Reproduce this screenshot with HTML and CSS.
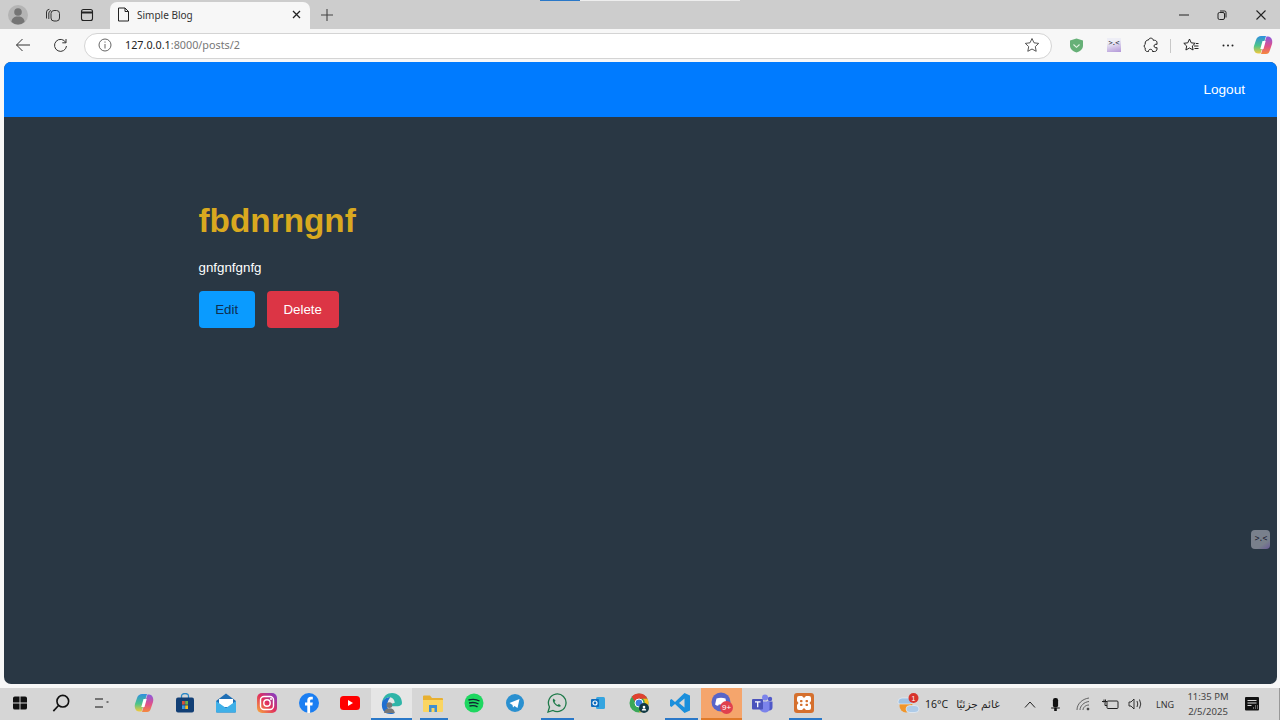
FILE: index.html
```html
<!DOCTYPE html>
<html lang="en">
<head>
  <meta charset="UTF-8">
  <title>Simple Blog</title>
  <link rel="stylesheet" href="styles.css">
</head>
<body>

<div class="top-strip"><span class="strip-blue"></span><span class="strip-light"></span></div>

<header class="tabbar">
  <div class="slot">
    <svg width="20" height="20" viewBox="0 0 20 20"><circle cx="10" cy="10" r="10" fill="#b4b4b4"/><circle cx="10" cy="7" r="3.800" fill="#757575"/><path d="M3.500 17c0-3.500 2.500-5.500 6.500-5.500s6.500 2 6.500 5.500q-3 2.500-6.500 2.500T3.500 17z" fill="#757575"/></svg>
  </div>
  <div class="slot">
    <svg width="16" height="16" viewBox="0 0 16 16" fill="none" stroke="#333" stroke-width="1"><rect x="6" y="3.500" width="8.500" height="10.500" rx="3"/><path d="M6 3.500A3 3 0 0 0 3.800 6v6M4.400 2.300A3 3 0 0 0 1.500 5v6.500"/></svg>
  </div>
  <div class="slot">
    <svg width="14" height="14" viewBox="0 0 14 14" fill="none" stroke="#222" stroke-width="1.100"><rect x="1.500" y="1.500" width="11" height="11" rx="2"/><path d="M1.500 4.500h11" stroke-width="2"/></svg>
  </div>
  <div class="tab">
    <svg width="13" height="15" viewBox="0 0 13 15" fill="none" stroke="#222" stroke-width="1"><path d="M1.500 1h6.500l3.500 3.500v9.500h-10zM8 1v3.500h3.500"/></svg>
    <span class="tab-title">Simple Blog</span>
    <svg class="tab-close" width="9" height="9" viewBox="0 0 9 9" stroke="#222" stroke-width="1.300"><path d="M1 1l7 7M8 1l-7 7"/></svg>
  </div>
  <div class="slot">
    <svg width="14" height="14" viewBox="0 0 14 14" stroke="#444" stroke-width="1.100"><path d="M7 1v12M1 7h12"/></svg>
  </div>
  <div class="spacer"></div>
  <div class="slot win">
    <svg width="10" height="10" viewBox="0 0 10 10" stroke="#222" stroke-width="1"><path d="M0 5h10"/></svg>
  </div>
  <div class="slot win">
    <svg width="10" height="10" viewBox="0 0 10 10" fill="none" stroke="#222" stroke-width="1"><rect x="1" y="2.500" width="6.500" height="7" rx="1.500"/><path d="M3 1h4.500a1.500 1.500 0 0 1 1.500 1.500v5"/></svg>
  </div>
  <div class="slot win">
    <svg width="10" height="10" viewBox="0 0 10 10" stroke="#222" stroke-width="1.100"><path d="M.5.500l9 9M9.500.500l-9 9"/></svg>
  </div>
</header>

<nav class="toolbar">
  <div class="slot nav">
    <svg width="16" height="14" viewBox="0 0 16 14" fill="none" stroke="#333" stroke-width="1"><path d="M15 7H1.500M7.500 1l-6 6 6 6"/></svg>
  </div>
  <div class="slot nav">
    <svg width="15" height="15" viewBox="0 0 15 15" fill="none" stroke="#333" stroke-width="1"><path d="M12.800 4.500A6 6 0 1 0 13.500 8M13 1v3.800H9.300"/></svg>
  </div>
  <div class="address">
    <svg width="14" height="14" viewBox="0 0 14 14" fill="none" stroke="#555" stroke-width=".9"><circle cx="7" cy="7" r="6"/><path d="M7 6v4.500M7 3.500v1.200"/></svg>
    <div class="url"><span class="host">127.0.0.1</span>:8000/posts/2</div>
    <svg class="addr-star" width="16" height="16" viewBox="0 0 16 16" fill="none" stroke="#444" stroke-width=".9"><path d="M8 1.500l2 4.300 4.700.6-3.400 3.200.9 4.700L8 12l-4.200 2.300.9-4.700L1.300 6.400 6 5.800z"/></svg>
  </div>
  <div class="slot nav">
    <svg class="shift-left" width="15" height="15" viewBox="0 0 14 15"><path d="M7 .5l6.500 2v5c0 3.500-3 6-6.500 7-3.500-1-6.500-3.500-6.500-7v-5z" fill="#66b077"/><path d="M4 6.500l3 2.800 3-2.800" fill="none" stroke="#e4f2e4" stroke-width="1.100"/></svg>
  </div>
  <div class="slot nav">
    <div class="ext-face">&gt;.&lt;</div>
  </div>
  <div class="slot nav">
    <svg width="16" height="16" viewBox="0 0 16 16" fill="none" stroke="#222" stroke-width="1"><path d="M5.500 3C5.800 1.500 7 1 8.300 1.200 9.600 1.500 10.300 2.300 10.300 3.300h1.200c1.500 0 2.500 1 2.500 2.500v1.600c-1.300-.6-3 .2-3 1.600s1.700 2.200 3 1.600v1.400c0 1.500-1 2.500-2.500 2.500H9.500c.2-1.300-.8-2.200-2-2.200s-2.200.9-2 2.200H4.300C3 14.500 2.200 13.600 2.200 12.300V10.800C.8 10.500.8 7.700 2.200 7.400V6c0-1.700 1.500-3 3.300-3z"/></svg>
  </div>
  <span class="tool-sep"></span>
  <div class="slot nav">
    <svg width="16" height="14" viewBox="0 0 16 14" fill="none" stroke="#222" stroke-width="1"><path d="M6.500 1l1.700 3.800 4 .5L9.300 8l.8 4-3.600-2-3.600 2 .8-4L.8 5.300l4-.5zM11 8h4.500M11.500 10.500h4M13 5.500h2.500"/></svg>
  </div>
  <div class="slot nav">
    <svg width="12" height="3" viewBox="0 0 12 3" fill="#222"><circle cx="1.500" cy="1.500" r="1"/><circle cx="6" cy="1.500" r="1"/><circle cx="10.500" cy="1.500" r="1"/></svg>
  </div>
  <div class="slot nav last">
    <svg width="20" height="20" viewBox="0 0 20 20">
      <defs>
        <linearGradient id="copilotA" x1="0" y1="0" x2="0" y2="1"><stop offset="0" stop-color="#2f8fe0"/><stop offset=".55" stop-color="#4cc48a"/><stop offset="1" stop-color="#f4c93c"/></linearGradient>
        <linearGradient id="copilotB" x1="0" y1="0" x2="0" y2="1"><stop offset="0" stop-color="#8a5ce0"/><stop offset=".55" stop-color="#e0508a"/><stop offset="1" stop-color="#f58a3c"/></linearGradient>
      </defs>
      <path d="M8 1h5L7.500 18.500H5C2 18.500 0 15 1 11l2-6C4 2 6 1 8 1z" fill="url(#copilotA)"/>
      <path d="M13 19H8L13.500 1.500H15c3 0 5 3.500 4 7.500l-2 6c-1 3-2 4-4 4z" fill="url(#copilotB)"/>
      <path d="M9.500 6h3.200l-2.200 8H7.300z" fill="#fff"/>
    </svg>
  </div>
</nav>

<div class="page">
  <div class="navbar">
    <a class="nav-link">Logout</a>
  </div>
  <main class="post">
    <h1>fbdnrngnf</h1>
    <p>gnfgnfgnfg</p>
    <div class="actions">
      <button class="btn btn-edit">Edit</button>
      <button class="btn btn-delete">Delete</button>
    </div>
  </main>
  <div class="side-widget">&gt;.&lt;</div>
</div>

<footer class="taskbar">
  <div class="task">
    <svg width="14" height="14" viewBox="0 0 15 15" fill="#111"><path d="M0 2.500Q0 .5 2 .5h5v6.500H0zM8 .5h5q2 0 2 2v4.500H8zM0 8h7v6.500H2q-2 0-2-2zM8 8h7v4.500q0 2-2 2H8z"/></svg>
  </div>
  <div class="task">
    <svg width="18" height="18" viewBox="0 0 20 20" fill="none" stroke="#111" stroke-width="1.800"><circle cx="12" cy="8" r="6.500"/><path d="M7.500 12.500L1.500 19"/></svg>
  </div>
  <div class="task">
    <svg width="14" height="10" viewBox="0 0 14 10" stroke="#111" stroke-width="1.200"><path d="M0 1h8M0 9h8M11.500 4h2"/></svg>
  </div>
  <div class="task">
    <svg width="20" height="20" viewBox="0 0 20 20">
      <path d="M8 1h5L7.500 18.500H5C2 18.500 0 15 1 11l2-6C4 2 6 1 8 1z" fill="url(#copilotA)"/>
      <path d="M13 19H8L13.500 1.500H15c3 0 5 3.500 4 7.500l-2 6c-1 3-2 4-4 4z" fill="url(#copilotB)"/>
      <path d="M9.500 6h3.200l-2.200 8H7.300z" fill="#fff"/>
    </svg>
  </div>
  <div class="task">
    <svg width="20" height="20" viewBox="0 0 20 20"><path d="M6.500 5V3a3.500 2.500 0 0 1 7 0v2" fill="none" stroke="#2a88c8" stroke-width="1.300"/><rect x="1" y="4.500" width="18" height="15" rx="2" fill="#123f75"/><rect x="7" y="8" width="2.800" height="3.600" fill="#d8503a"/><rect x="10.200" y="8" width="2.800" height="3.600" fill="#6cb04a"/><rect x="7" y="12.400" width="2.800" height="3.600" fill="#3a9ae0"/><rect x="10.200" y="12.400" width="2.800" height="3.600" fill="#f4c020"/></svg>
  </div>
  <div class="task">
    <svg width="20" height="20" viewBox="0 0 20 20"><path d="M10 .5L20 8v10.500q0 1-1 1H1q-1 0-1-1V8z" fill="#1f6fb5"/><path d="M3 6h14v8H3z" fill="#fff"/><path d="M0 8l10 7 10-7v10.500q0 1-1 1H1q-1 0-1-1z" fill="#3fb0e8"/></svg>
  </div>
  <div class="task">
    <svg width="20" height="20" viewBox="0 0 20 20"><defs><linearGradient id="ig" x1="0" y1="1" x2="1" y2="0"><stop offset="0" stop-color="#f9b13c"/><stop offset=".5" stop-color="#e0305e"/><stop offset="1" stop-color="#7a3fd0"/></linearGradient></defs><rect width="20" height="20" rx="5" fill="url(#ig)"/><rect x="3.500" y="3.500" width="13" height="13" rx="3.500" fill="none" stroke="#fff" stroke-width="1.400"/><circle cx="10" cy="10" r="3.200" fill="none" stroke="#fff" stroke-width="1.400"/><circle cx="14" cy="6" r="1" fill="#fff"/></svg>
  </div>
  <div class="task">
    <svg width="20" height="20" viewBox="0 0 20 20"><circle cx="10" cy="10" r="10" fill="#1a7ef2"/><path d="M8.300 20v-7.500H6V9.500h2.300V7.300C8.300 5 9.700 3.800 11.700 3.800h2.100v2.800h-1.400c-1 0-1.300.6-1.300 1.300v1.600h2.700l-.4 3h-2.300V20z" fill="#fff"/></svg>
  </div>
  <div class="task">
    <svg width="20" height="14" viewBox="0 0 20 14"><rect width="20" height="14" rx="3.500" fill="#f00"/><path d="M8 4l5 3-5 3z" fill="#fff"/></svg>
  </div>
  <div class="task active">
    <svg width="21" height="21" viewBox="0 0 20 20"><path d="M1 9C2 3 6 0 10.500 0 16 0 20 4 20 9.500c0 2-2 3-4 3H9c0-2 2-3 4-3 0-3-2-5.500-5-5.500-3 0-5.500 2-7 5z" fill="#2fb5a8"/><path d="M1 9C0 15 3 20 9 20c2 0 3.500-.5 4.500-1.500C9 19 6 16 6 12c0-3 1-6 3-8C5 4 2 6 1 9z" fill="#1f6fd0"/><circle cx="8" cy="11.500" r="2.800" fill="#777"/><path d="M3 19c0-3 2-4.500 5-4.500s5 1.500 5 4.500z" fill="#777"/></svg>
  </div>
  <div class="task open-short">
    <svg width="20" height="17" viewBox="0 0 20 17"><path d="M0 1.500q0-1 1-1h6l2 2.500h10q1 0 1 1V7H0z" fill="#e8b030"/><path d="M0 5h20v11q0 1-1 1H1q-1 0-1-1z" fill="#fad561"/><path d="M6 17v-7h8v7h-2.500v-4h-3v4z" fill="#3f8fd0"/></svg>
  </div>
  <div class="task">
    <svg width="20" height="20" viewBox="0 0 20 20"><circle cx="10" cy="10" r="9.500" fill="#1ed760"/><path d="M4.500 7c4-1 8-.7 11 1M5 10c3.500-.8 7-.5 9.500 1M5.500 13c3-.7 6-.4 8 .8" fill="none" stroke="#123" stroke-width="1.400"/></svg>
  </div>
  <div class="task">
    <svg width="18" height="18" viewBox="0 0 18 18"><circle cx="9" cy="9" r="9" fill="#2a90d0"/><path d="M3.500 9l10-4-2 9-3-2-1.500 1.500-.5-2.500z" fill="#fff"/></svg>
  </div>
  <div class="task open">
    <svg width="20" height="20" viewBox="0 0 20 20" fill="none"><path d="M1 19l1.500-5A8.800 8.800 0 1 1 6 17.500z" stroke="#1f7a4a" stroke-width="1.300"/><path d="M6.500 5.500c-1.500 1.500-.5 4 1.500 6s4.500 3 6 1.500l-2-2-1.500 1c-1-.5-2.500-2-3-3l1-1.500z" fill="#1f7a4a"/></svg>
  </div>
  <div class="task">
    <svg width="14" height="14" viewBox="0 0 14 14"><rect x="5" y="1" width="9" height="12" rx="1.500" fill="#35a5e0"/><rect y="3" width="8" height="8" rx="1" fill="#0f6cbd"/><circle cx="4" cy="7" r="2" fill="none" stroke="#fff" stroke-width="1.200"/></svg>
  </div>
  <div class="task">
    <svg width="20" height="20" viewBox="0 0 20 20"><circle cx="10" cy="10" r="9.500" fill="#3aa757"/><path d="M10 .5a9.500 9.500 0 0 1 8.500 5.200H10a4.300 4.300 0 0 0-4 2.800L2.800 3.800A9.500 9.500 0 0 1 10 .5z" fill="#e0402f"/><path d="M18.500 5.700A9.500 9.500 0 0 1 10 19.500l3.800-6.600a4.300 4.300 0 0 0 0-7.200z" fill="#f6c01e"/><circle cx="10" cy="10" r="4" fill="#3b7de0" stroke="#fff" stroke-width="1"/><circle cx="15" cy="15" r="5" fill="#123a44"/><circle cx="15" cy="14" r="1.300" fill="#fff"/><path d="M12.800 17.500c0-1.500 1-2 2.200-2s2.200.5 2.200 2z" fill="#fff"/></svg>
  </div>
  <div class="task open">
    <svg width="20" height="20" viewBox="0 0 20 20"><path d="M14.500 0L20 2.500v15L14.500 20 5 11 1.500 14 0 13V7l1.500-1L5 9z" fill="#1a8fdc"/><path d="M14.500 5.500L9 10l5.500 4.500z" fill="#d6d6d6"/></svg>
  </div>
  <div class="task discord">
    <svg width="22" height="22" viewBox="0 0 22 22"><circle cx="10" cy="10" r="9.500" fill="#5865c8"/><path d="M5.500 6.500q4.500-1.500 9 0l1 6q-1.500 1.200-3 1.200l-.7-1.200h-4l-.7 1.200q-1.500 0-3-1.200z" fill="#fff"/><circle cx="15.500" cy="15.500" r="6.500" fill="#e0404e"/><text x="15.500" y="18" class="badge-text">9+</text></svg>
  </div>
  <div class="task">
    <svg width="21" height="19" viewBox="0 0 21 19"><circle cx="13" cy="3.500" r="3" fill="#7b83eb"/><circle cx="18" cy="5" r="2.200" fill="#5059c9"/><path d="M15 7.500h5.500v6c0 2-1.500 3-3 3-2 0-2.500-1-2.500-2z" fill="#5059c9"/><path d="M7 7.500h10.500v7c0 2.500-2 4-4.500 4s-4.500-1.500-6-4z" fill="#7b83eb"/><rect y="5" width="11" height="10.500" rx="1" fill="#4b53bc"/><path d="M3 7.800h5.500M5.700 7.800v5.500" stroke="#fff" stroke-width="1.300"/></svg>
  </div>
  <div class="task open">
    <svg width="20" height="20" viewBox="0 0 20 20"><rect width="20" height="20" rx="3" fill="#d5702e"/><path d="M5 3h3l2 2 2-2h3q2 0 2 2v3l-1.500 2 1.500 2v3q0 2-2 2h-3l-2-2-2 2H5q-2 0-2-2v-3l1.500-2L3 8V5q0-2 2-2z" fill="#fff"/><rect x="6" y="7" width="2.500" height="2.300" rx=".8" fill="#d5702e"/><rect x="6" y="10.700" width="2.500" height="2.300" rx=".8" fill="#d5702e"/><rect x="11.500" y="7" width="2.500" height="2.300" rx=".8" fill="#d5702e"/><rect x="11.500" y="10.700" width="2.500" height="2.300" rx=".8" fill="#d5702e"/></svg>
  </div>

  <div class="spacer"></div>

  <div class="weather">
    <svg width="23" height="22" viewBox="0 0 23 22"><circle cx="9" cy="13" r="6.500" fill="#f0962c"/><path d="M1 9q0-4 4-4h8q3 0 3 3t-3 3H3q-2 0-2-2z" fill="#9fc2e4" stroke="#f0f4f8" stroke-width=".6"/><path d="M9 16q0-3.500 4-3.500h5q4 0 4 3.500t-4 3.500h-5q-4 0-4-3.500z" fill="#aecbe8" stroke="#f0f4f8" stroke-width=".6"/><circle cx="16.500" cy="5" r="5" fill="#d8342c"/><text x="16.500" y="7.500" class="alert-text">1</text></svg>
    <span class="temp">16°C</span>
    <span class="cond">غائم جزئيًا</span>
  </div>
  <div class="tray">
    <div class="tray-item w-chevron"><svg width="12" height="7" viewBox="0 0 12 7" fill="none" stroke="#222" stroke-width="1"><path d="M1 6.500l5-5.500 5 5.500"/></svg></div>
    <div class="tray-item w-mic"><svg width="9" height="13" viewBox="0 0 10 15" fill="#111"><rect x="2" width="6" height="11" rx="2.500"/><path d="M0 11h10v1H0zM3.500 12h3v3h-3z"/></svg></div>
    <div class="tray-item w-wifi"><svg width="15" height="14" viewBox="0 0 15 14" fill="none" stroke="#444" stroke-width=".8"><path d="M1 13C1 7 6 2 13 1M4 13c0-4 4-8 9-8.500M7 13c0-2.500 2.500-5 6-5"/><circle cx="12" cy="12" r="1" fill="#333"/></svg></div>
    <div class="tray-item w-batt"><svg width="17" height="11" viewBox="0 0 17 11" fill="none" stroke="#222" stroke-width="1"><rect x="5" y="2" width="11" height="7.500" rx="1"/><path d="M0 2.500h5M2 .5v3M3.500.5v3M3 3.500v3h2"/></svg></div>
    <div class="tray-item w-vol"><svg width="15" height="12" viewBox="0 0 15 12" fill="none" stroke="#222" stroke-width=".9"><path d="M1 4h2l3-3v10L3 8H1zM9 3q1.500 3 0 6M11.500 1.500q2.500 4.500 0 9"/></svg></div>
    <div class="tray-lang">LNG</div>
    <div class="clock"><span>11:35 PM</span><span>2/5/2025</span></div>
    <div class="tray-item w-notif"><svg width="14" height="14" viewBox="0 0 14 14"><rect width="14" height="13.500" rx="1" fill="#111"/><path d="M2.500 3.500h9M2.500 6h9M2.500 8.500h4" stroke="#eee" stroke-width=".9"/><path d="M8 11h1M10 11h1M12 11h1M10 9h1M12 9h1" stroke="#bbb" stroke-width="1"/></svg></div>
  </div>
</footer>

</body>
</html>
```

FILE: styles.css
```css
* {
  box-sizing: border-box;
}
html, body {
  margin: 0;
  height: 100%;
}
body {
  width: 1280px;
  height: 720px;
  overflow: hidden;
  display: flex;
  flex-direction: column;
  position: relative;
  background-color: #f7f7f7;
  font-family: 'Liberation Sans', sans-serif;
  color: #222;
}
svg {
  display: block;
  flex-shrink: 0;
}
.spacer {
  flex: 1;
}
.slot {
  width: 34.5px;
  display: flex;
  align-items: center;
  justify-content: center;
  flex-shrink: 0;
}

/* tab strip */
.top-strip {
  position: absolute;
  top: 0;
  left: 540px;
  display: flex;
  height: 1px;
}
.strip-blue {
  width: 40px;
  background-color: #2a78c8;
}
.strip-light {
  width: 160px;
  background-color: #eeeeee;
}
.tabbar {
  height: 29px;
  flex-shrink: 0;
  display: flex;
  align-items: stretch;
  padding-left: 1px;
  background-color: #cdcdcd;
}
.tab {
  width: 200px;
  margin: 2px 0 0 5.500px;
  padding: 0 9px 2px 7px;
  display: flex;
  align-items: center;
  background-color: #f7f7f7;
  border-radius: 7px 7px 0 0;
}
.tab-title {
  margin-left: 7px;
  font-family: 'Noto Sans', sans-serif;
  font-size: 10px;
  color: #333;
}
.tab-close {
  margin-left: auto;
}
.slot.win {
  width: 38.500px;
}

/* address bar row */
.toolbar {
  height: 33px;
  flex-shrink: 0;
  display: flex;
  align-items: center;
  padding-left: 4.500px;
}
.slot.nav {
  width: 37px;
  height: 100%;
  padding-bottom: 1px;
}
.slot.last {
  width: 34px;
}
.shift-left {
  margin-left: -1px;
}
.address {
  flex: 1;
  height: 26px;
  margin: 0 6px 0 5.500px;
  padding: 0 11px 2px 13px;
  display: flex;
  align-items: center;
  background-color: #fff;
  border: 1px solid #d4d4d4;
  border-radius: 13px;
}
.url {
  margin-left: 13px;
  font-family: 'Noto Sans', sans-serif;
  font-size: 10.800px;
  color: #777;
}
.host {
  color: #222;
}
.addr-star {
  margin-left: auto;
}
.tool-sep {
  width: 1px;
  height: 14px;
  margin: 0 1px;
  background-color: #c8c8c8;
  flex-shrink: 0;
}
.ext-face {
  width: 14px;
  height: 14px;
  font-family: 'DejaVu Sans Mono', monospace;
  font-size: 7px;
  line-height: 11px;
  text-align: center;
  letter-spacing: -.8px;
  color: #223;
  background: linear-gradient(165deg, #eeeef6 30%, #b296d8);
}

/* the blog page itself */
.page {
  flex: 1;
  margin: 0 3px 0 4px;
  position: relative;
  overflow: hidden;
  background-color: #293744;
  border-radius: 7px;
}
.navbar {
  height: 55px;
  padding: 0 32px;
  display: flex;
  align-items: center;
  justify-content: flex-end;
  background-color: #007bff;
}
.nav-link {
  font-size: 13.600px;
  color: #fff;
}
.post {
  padding: 85px 194.500px 0;
  color: #fff;
}
.post h1 {
  margin: 0;
  font-size: 33.330px;
  line-height: 38px;
  color: #d9a91f;
}
.post p {
  margin: 20px 0 0;
  font-size: 13.330px;
  line-height: 15px;
}
.actions {
  display: flex;
  gap: 12px;
  margin-top: 16px;
}
.btn {
  height: 37px;
  padding: 0 16.670px;
  border: none;
  border-radius: 4px;
  font-family: inherit;
  font-size: 13.330px;
}
.btn-edit {
  background-color: #0a9bff;
  color: #0f2f50;
}
.btn-delete {
  background-color: #dc3545;
  color: #fff;
}
.side-widget {
  position: absolute;
  top: 468px;
  right: 7px;
  width: 19px;
  height: 19px;
  font-family: 'DejaVu Sans Mono', monospace;
  font-size: 8px;
  line-height: 17px;
  text-align: center;
  letter-spacing: -1px;
  color: #223;
  background: linear-gradient(145deg, #79808c 70%, #6a5a96);
  border-radius: 4px;
}

/* windows taskbar */
.taskbar {
  height: 32px;
  margin-top: 4px;
  padding-left: 0;
  flex-shrink: 0;
  display: flex;
  align-items: stretch;
  background-color: #d6d6d6;
  border-right: 1px solid #999;
}
.task {
  width: 41.300px;
  display: flex;
  align-items: center;
  justify-content: center;
  flex-shrink: 0;
  border-bottom: 2px solid transparent;
}
.task:first-child {
  margin-left: -1px;
}
.task.active {
  background-color: #e6e6e6;
  border-bottom-color: #2a78c8;
}
.task.open {
  border-image: linear-gradient(90deg, transparent 15%, #2a78c8 15%, #2a78c8 90%, transparent 90%) 1;
}
.task.open-short {
  border-image: linear-gradient(90deg, transparent 20%, #2a78c8 20%, #2a78c8 85%, transparent 85%) 1;
}
.task.discord {
  background-color: #f5a56c;
  border-bottom-color: #e07a2a;
}
.badge-text {
  font-family: 'Liberation Sans', sans-serif;
  font-size: 8px;
  fill: #fff;
  text-anchor: middle;
}
.alert-text {
  font-family: 'Liberation Sans', sans-serif;
  font-size: 7px;
  fill: #fff;
  text-anchor: middle;
}
.weather {
  display: flex;
  align-items: center;
  width: 125px;
  padding-left: 8px;
  font-size: 10.500px;
  color: #222;
}
.temp {
  margin-left: 5px;
  font-family: 'Noto Sans', sans-serif;
}
.cond {
  margin-left: 8px;
  font-family: 'DejaVu Sans', sans-serif;
  font-size: 10.500px;
  white-space: nowrap;
}
.tray {
  display: flex;
  align-items: center;
  font-family: 'Noto Sans', sans-serif;
  color: #333;
}
.tray-item {
  display: flex;
  align-items: center;
  justify-content: center;
}
.w-chevron { width: 28px; padding-left: 4px; }
.w-mic { width: 27px; }
.w-wifi { width: 28px; padding-left: 1px; }
.w-batt { width: 26px; }
.w-vol { width: 24px; }
.w-notif { width: 46px; padding-right: 8px; }
.tray-lang {
  width: 36px;
  font-size: 9px;
  text-align: center;
}
.clock {
  width: 50px;
  display: flex;
  flex-direction: column;
  gap: 3px;
  align-items: center;
  font-size: 9.500px;
  line-height: 12px;
  color: #444;
}
```
